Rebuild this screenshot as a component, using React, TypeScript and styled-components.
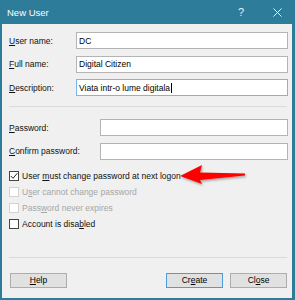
import styled, { createGlobalStyle } from "styled-components";

const GlobalStyle = createGlobalStyle`
  html, body {
    margin: 0;
    padding: 0;
    background: #2d7c9a;
  }
  * {
    box-sizing: border-box;
  }
`;

const Window = styled.div`
  position: relative;
  width: 295px;
  height: 300px;
  display: flex;
  flex-direction: column;
  background: #2d7c9a;
  padding: 0 3px 2px 2px;
  font-family: "Liberation Sans", Arial, sans-serif;
  font-size: 8.5px;
  color: #000;
`;

const TitleBar = styled.div`
  height: 24px;
  display: flex;
  align-items: center;
  gap: 6px;
  padding-left: 5px;
  color: #fff;
  font-size: 9.5px;
`;

const Title = styled.span`
  flex: 1;
`;

const TitleButton = styled.span`
  width: 30px;
  display: flex;
  justify-content: center;
  font-size: 11px;
  color: #e8f1f5;
`;

const Body = styled.div`
  flex: 1;
  background: #f0f0f0;
  display: flex;
  flex-direction: column;
  padding: 8px 4px 0 7px;
`;

const FieldGrid = styled.div<{ $labelWidth: number }>`
  display: grid;
  grid-template-columns: ${({ $labelWidth }) => $labelWidth}px 1fr;
  row-gap: 6.5px;
  align-items: center;
`;

const Label = styled.label`
  color: #111;
`;

const Input = styled.div<{ $focused?: boolean }>`
  height: 17px;
  background: #fff;
  border: 1px solid ${({ $focused }) => ($focused ? "#7ab6e6" : "#b4b4b4")};
  padding: 0 2px;
  display: flex;
  align-items: center;
`;

const Caret = styled.span`
  display: inline-block;
  width: 1px;
  height: 10px;
  background: #000;
  margin-left: 1px;
`;

const Separator = styled.div<{ $top: number; $bottom: number }>`
  height: 1px;
  background: #dadada;
  margin: ${({ $top, $bottom }) => `${$top}px 1px ${$bottom}px 0`};
`;

const Checks = styled.div`
  display: flex;
  flex-direction: column;
  margin-top: 8px;
`;

const CheckRow = styled.div<{ $disabled?: boolean }>`
  height: 16px;
  display: flex;
  align-items: center;
  gap: 3px;
  color: ${({ $disabled }) => ($disabled ? "#a6a6a6" : "#111")};
`;

const Box = styled.span<{ $disabled?: boolean }>`
  width: 10px;
  height: 10px;
  background: #fff;
  border: 1px solid ${({ $disabled }) => ($disabled ? "#d2d2d2" : "#444")};
  display: flex;
  align-items: center;
  justify-content: center;
`;

const Footer = styled.div`
  display: flex;
  align-items: center;
  padding: 0 1px;
  gap: 7px;
`;

const Spacer = styled.div`
  flex: 1;
`;

const Button = styled.div<{ $default?: boolean }>`
  width: 57px;
  height: 15px;
  background: #e1e1e1;
  border: 1px solid ${({ $default }) => ($default ? "#4a9be0" : "#adadad")};
  display: flex;
  align-items: center;
  justify-content: center;
`;

const Key = styled.span`
  text-decoration: underline;
`;

const Arrow = styled.svg`
  position: absolute;
  left: 176px;
  top: 162px;
`;

const Check = () => (
  <svg width="8" height="8" viewBox="0 0 8 8">
    <path d="M0.8 4 L3 6.3 L7.3 1.2" fill="none" stroke="#222" strokeWidth="1" />
  </svg>
);

const CloseIcon = () => (
  <svg width="9" height="9" viewBox="0 0 9 9">
    <path d="M0.5 0.5 L8.5 8.5 M8.5 0.5 L0.5 8.5" stroke="#e8f1f5" strokeWidth="1" />
  </svg>
);

const App = () => (
  <>
    <GlobalStyle />
    <Window>
      <TitleBar>
        <Title>New User</Title>
        <TitleButton>?</TitleButton>
        <TitleButton>
          <CloseIcon />
        </TitleButton>
      </TitleBar>
      <Body>
        <FieldGrid $labelWidth={67}>
          <Label>
            <Key>U</Key>ser name:
          </Label>
          <Input>DC</Input>
          <Label>
            <Key>F</Key>ull name:
          </Label>
          <Input>Digital Citizen</Input>
          <Label>
            <Key>D</Key>escription:
          </Label>
          <Input $focused>
            Viata intr-o lume digitala
            <Caret />
          </Input>
        </FieldGrid>

        <Separator $top={10} $bottom={12} />

        <FieldGrid $labelWidth={91}>
          <Label>
            <Key>P</Key>assword:
          </Label>
          <Input />
          <Label>
            <Key>C</Key>onfirm password:
          </Label>
          <Input />
        </FieldGrid>

        <Checks>
          <CheckRow>
            <Box>
              <Check />
            </Box>
            <span>
              User <Key>m</Key>ust change password at next logon
            </span>
          </CheckRow>
          <CheckRow $disabled>
            <Box $disabled />
            <span>
              U<Key>s</Key>er cannot change password
            </span>
          </CheckRow>
          <CheckRow $disabled>
            <Box $disabled />
            <span>
              Pass<Key>w</Key>ord never expires
            </span>
          </CheckRow>
          <CheckRow>
            <Box />
            <span>
              Account is disa<Key>b</Key>led
            </span>
          </CheckRow>
        </Checks>

        <Separator $top={25} $bottom={15} />

        <Footer>
          <Button>
            <Key>H</Key>elp
          </Button>
          <Spacer />
          <Button $default>
            Cr<Key>e</Key>ate
          </Button>
          <Button>
            Cl<Key>o</Key>se
          </Button>
        </Footer>
      </Body>

      <Arrow width="76" height="30" viewBox="0 0 76 30">
        <defs>
          <filter id="sh" x="-20%" y="-40%" width="140%" height="180%">
            <feDropShadow dx="1" dy="1.5" stdDeviation="1.2" floodColor="#000" floodOpacity="0.35" />
          </filter>
        </defs>
        <path
          d="M4 14 L26 3 L24 10.5 L69 11.5 L69 13.5 L24 18 L26 22 Z"
          fill="#f00"
          filter="url(#sh)"
        />
      </Arrow>
    </Window>
  </>
);

export default App;
